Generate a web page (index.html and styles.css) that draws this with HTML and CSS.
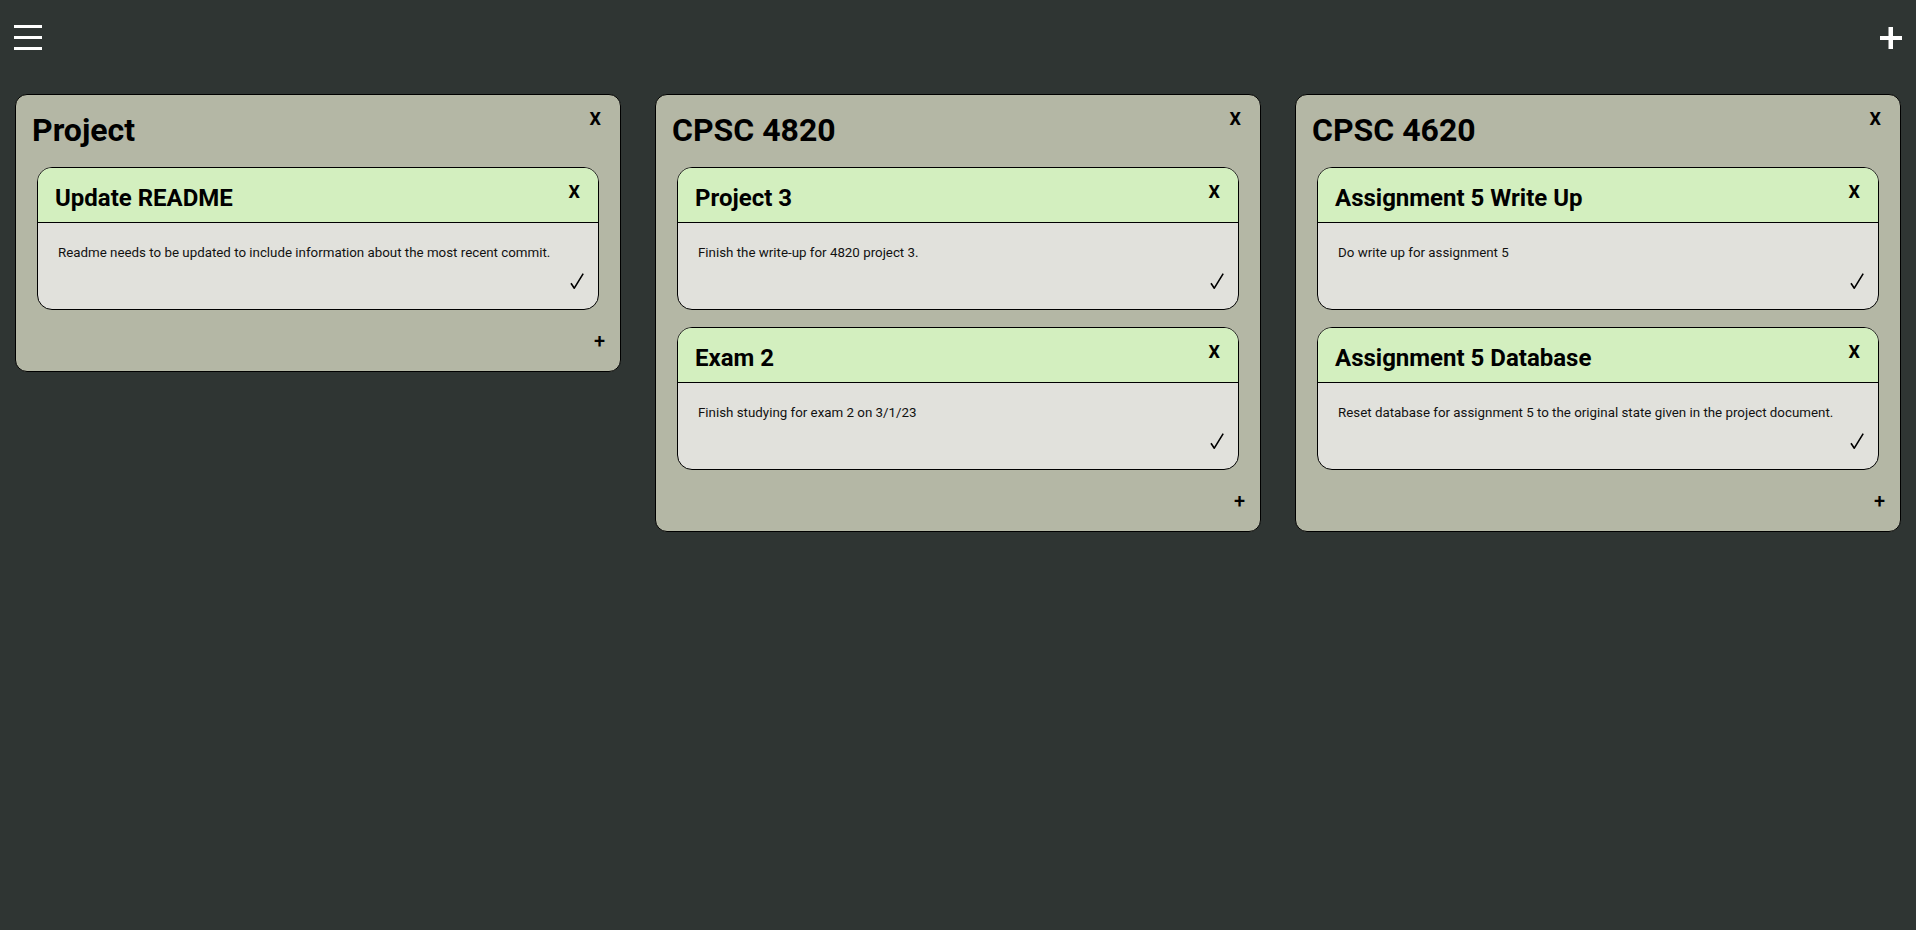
FILE: index.html
```html
<!DOCTYPE html>
<html lang="en">
<head>
<meta charset="utf-8">
<title>Board</title>
<link rel="stylesheet" href="styles.css">
</head>
<body>
<header class="topbar">
  <button class="icon-btn menu-btn" aria-label="Menu">
    <svg width="28" height="25" viewBox="0 0 28 25"><rect x="0" y="0" width="28" height="3" fill="#fff"/><rect x="0" y="11" width="28" height="3" fill="#fff"/><rect x="0" y="22" width="28" height="3" fill="#fff"/></svg>
  </button>
  <button class="icon-btn add-list-btn" aria-label="Add list">
    <svg width="22" height="22" viewBox="0 0 22 22"><rect x="0" y="9" width="22" height="4" fill="#fff"/><rect x="8.5" y="0" width="4.5" height="22" fill="#fff"/></svg>
  </button>
</header>
<main class="board">
  <section class="column">
    <div class="column-head"><h2 class="column-title">Project</h2><button class="close-btn">X</button></div>
    <div class="task-list">
      <article class="task">
        <div class="task-head"><h3 class="task-title">Update README</h3><button class="close-btn">X</button></div>
        <div class="task-body"><p class="task-desc">Readme needs to be updated to include information about the most recent commit.</p><div class="task-foot"><button class="check-btn" aria-label="Done"><svg width="14" height="16" viewBox="0 0 14 16"><path d="M1 10.2 L4.3 15.2 L13.2 0.6" fill="none" stroke="#000" stroke-width="1.6" stroke-linejoin="round"/></svg></button></div></div>
      </article>
    </div>
    <div class="column-foot"><button class="add-btn">+</button></div>
  </section>
  <section class="column">
    <div class="column-head"><h2 class="column-title">CPSC 4820</h2><button class="close-btn">X</button></div>
    <div class="task-list">
      <article class="task">
        <div class="task-head"><h3 class="task-title">Project 3</h3><button class="close-btn">X</button></div>
        <div class="task-body"><p class="task-desc">Finish the write-up for 4820 project 3.</p><div class="task-foot"><button class="check-btn" aria-label="Done"><svg width="14" height="16" viewBox="0 0 14 16"><path d="M1 10.2 L4.3 15.2 L13.2 0.6" fill="none" stroke="#000" stroke-width="1.6" stroke-linejoin="round"/></svg></button></div></div>
      </article>
      <article class="task">
        <div class="task-head"><h3 class="task-title">Exam 2</h3><button class="close-btn">X</button></div>
        <div class="task-body"><p class="task-desc">Finish studying for exam 2 on 3/1/23</p><div class="task-foot"><button class="check-btn" aria-label="Done"><svg width="14" height="16" viewBox="0 0 14 16"><path d="M1 10.2 L4.3 15.2 L13.2 0.6" fill="none" stroke="#000" stroke-width="1.6" stroke-linejoin="round"/></svg></button></div></div>
      </article>
    </div>
    <div class="column-foot"><button class="add-btn">+</button></div>
  </section>
  <section class="column">
    <div class="column-head"><h2 class="column-title">CPSC 4620</h2><button class="close-btn">X</button></div>
    <div class="task-list">
      <article class="task">
        <div class="task-head"><h3 class="task-title">Assignment 5 Write Up</h3><button class="close-btn">X</button></div>
        <div class="task-body"><p class="task-desc">Do write up for assignment 5</p><div class="task-foot"><button class="check-btn" aria-label="Done"><svg width="14" height="16" viewBox="0 0 14 16"><path d="M1 10.2 L4.3 15.2 L13.2 0.6" fill="none" stroke="#000" stroke-width="1.6" stroke-linejoin="round"/></svg></button></div></div>
      </article>
      <article class="task">
        <div class="task-head"><h3 class="task-title">Assignment 5 Database</h3><button class="close-btn">X</button></div>
        <div class="task-body"><p class="task-desc">Reset database for assignment 5 to the original state given in the project document.</p><div class="task-foot"><button class="check-btn" aria-label="Done"><svg width="14" height="16" viewBox="0 0 14 16"><path d="M1 10.2 L4.3 15.2 L13.2 0.6" fill="none" stroke="#000" stroke-width="1.6" stroke-linejoin="round"/></svg></button></div></div>
      </article>
    </div>
    <div class="column-foot"><button class="add-btn">+</button></div>
  </section>
</main>
</body>
</html>
```
FILE: styles.css
```css
* { box-sizing: border-box; }
html, body { margin: 0; padding: 0; }
body {
  background: #2f3533;
  font-family: Roboto, "Liberation Sans", sans-serif;
  color: #000;
  width: 1916px;
  min-height: 930px;
}
button {
  background: none;
  border: 0;
  padding: 0;
  margin: 0;
  font: inherit;
  color: inherit;
  line-height: normal;
  cursor: pointer;
}
.topbar {
  height: 94px;
  display: flex;
  justify-content: space-between;
  align-items: flex-start;
  padding: 25px 14px 0 14px;
}
.icon-btn { display: block; }
.icon-btn svg { display: block; }
.add-list-btn { margin-top: 2px; }

.board {
  display: grid;
  grid-template-columns: repeat(3, 1fr);
  column-gap: 34px;
  align-items: start;
  padding: 0 15px;
}
.column {
  background: #b4b7a5;
  border: 1px solid #000;
  border-radius: 12px;
}
.column-head {
  display: flex;
  justify-content: space-between;
  align-items: flex-start;
  padding: 13px 19px 0 16px;
}
.column-title {
  margin: 3px 0 0;
  font-size: 32px;
  font-weight: 700;
  line-height: normal;
}
.close-btn {
  font-size: 18px;
  font-weight: 700;
}
.task-list {
  display: flex;
  flex-direction: column;
  gap: 17px;
  padding: 18px 21px 0;
}
.task {
  border: 1px solid #000;
  border-radius: 15px;
  overflow: hidden;
  background: #e1e1dc;
}
.task-head {
  display: flex;
  justify-content: space-between;
  align-items: flex-start;
  background: #d3efbf;
  border-bottom: 1px solid #000;
  padding: 13px 18px 10px 17px;
}
.task-title {
  margin: 3px 0 0;
  font-size: 24px;
  font-weight: 700;
  line-height: normal;
}
.task-body {
  padding: 22px 14px 20px 20px;
}
.task-desc {
  margin: 0;
  font-size: 13.33px;
  line-height: normal;
  color: #111;
}
.task-foot {
  display: flex;
  justify-content: flex-end;
  margin-top: 13px;
}
.check-btn { display: block; }
.check-btn svg { display: block; }
.column-foot {
  display: flex;
  justify-content: flex-end;
  padding: 19px 15px 18px;
}
.add-btn {
  font-size: 20px;
  font-weight: 500;
}
```
